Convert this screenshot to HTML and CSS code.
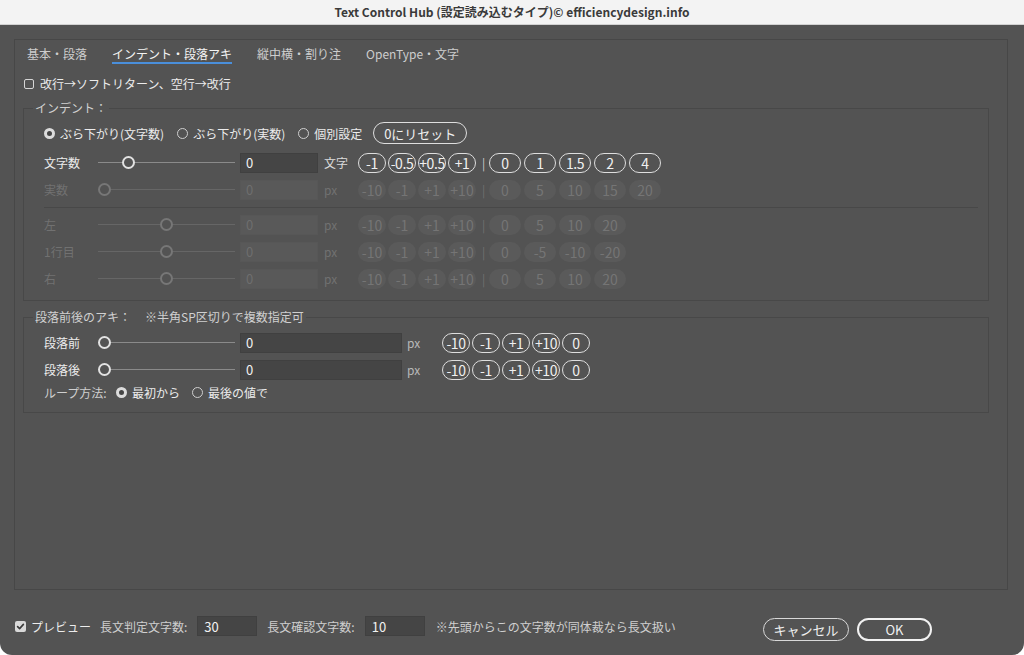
FILE: index.html
```html
<!DOCTYPE html>
<html lang="ja">
<head>
    <meta charset="UTF-8">
    <title>Text Control Hub</title>
    <link rel="stylesheet" href="styles.css">
</head>
<body>
    <div class="window">
        <div class="titlebar">Text Control Hub (設定読み込むタイプ)© efficiencydesign.info</div>

        <div class="content">
            <div class="panel">
                <div class="tabs">
                    <span class="tab">基本・段落</span>
                    <span class="tab active">インデント・段落アキ</span>
                    <span class="tab">縦中横・割り注</span>
                    <span class="tab">OpenType・文字</span>
                </div>

                <div class="check-row">
                    <span class="checkbox"></span>
                    <span>改行→ソフトリターン、空行→改行</span>
                </div>

                <fieldset class="group indent">
                    <legend>インデント：</legend>

                    <div class="radio-row">
                        <span class="radio on"></span><span class="radio-text">ぶら下がり(文字数)</span>
                        <span class="radio"></span><span class="radio-text">ぶら下がり(実数)</span>
                        <span class="radio"></span><span class="radio-text">個別設定</span>
                        <button class="reset">0にリセット</button>
                    </div>

                    <div class="row">
                        <span class="label">文字数</span>
                        <div class="slider"><span class="knob" style="left: 24px"></span></div>
                        <input class="field" type="text" value="0">
                        <span class="unit">文字</span>
                        <button class="pill">-1</button>
                        <button class="pill">-0.5</button>
                        <button class="pill">+0.5</button>
                        <button class="pill">+1</button>
                        <span class="sep">|</span>
                        <button class="pill wide">0</button>
                        <button class="pill wide">1</button>
                        <button class="pill wide">1.5</button>
                        <button class="pill wide">2</button>
                        <button class="pill wide">4</button>
                    </div>

                    <div class="row off">
                        <span class="label">実数</span>
                        <div class="slider"><span class="knob" style="left: 0px"></span></div>
                        <input class="field" type="text" value="0" disabled>
                        <span class="unit">px</span>
                        <button class="pill">-10</button>
                        <button class="pill">-1</button>
                        <button class="pill">+1</button>
                        <button class="pill">+10</button>
                        <span class="sep">|</span>
                        <button class="pill wide">0</button>
                        <button class="pill wide">5</button>
                        <button class="pill wide">10</button>
                        <button class="pill wide">15</button>
                        <button class="pill wide">20</button>
                    </div>

                    <div class="divider"></div>

                    <div class="row off">
                        <span class="label">左</span>
                        <div class="slider"><span class="knob" style="left: 62px"></span></div>
                        <input class="field" type="text" value="0" disabled>
                        <span class="unit">px</span>
                        <button class="pill">-10</button>
                        <button class="pill">-1</button>
                        <button class="pill">+1</button>
                        <button class="pill">+10</button>
                        <span class="sep">|</span>
                        <button class="pill wide">0</button>
                        <button class="pill wide">5</button>
                        <button class="pill wide">10</button>
                        <button class="pill wide">20</button>
                    </div>

                    <div class="row off">
                        <span class="label">1行目</span>
                        <div class="slider"><span class="knob" style="left: 62px"></span></div>
                        <input class="field" type="text" value="0" disabled>
                        <span class="unit">px</span>
                        <button class="pill">-10</button>
                        <button class="pill">-1</button>
                        <button class="pill">+1</button>
                        <button class="pill">+10</button>
                        <span class="sep">|</span>
                        <button class="pill wide">0</button>
                        <button class="pill wide">-5</button>
                        <button class="pill wide">-10</button>
                        <button class="pill wide">-20</button>
                    </div>

                    <div class="row off">
                        <span class="label">右</span>
                        <div class="slider"><span class="knob" style="left: 62px"></span></div>
                        <input class="field" type="text" value="0" disabled>
                        <span class="unit">px</span>
                        <button class="pill">-10</button>
                        <button class="pill">-1</button>
                        <button class="pill">+1</button>
                        <button class="pill">+10</button>
                        <span class="sep">|</span>
                        <button class="pill wide">0</button>
                        <button class="pill wide">5</button>
                        <button class="pill wide">10</button>
                        <button class="pill wide">20</button>
                    </div>
                </fieldset>

                <fieldset class="group para">
                    <legend>段落前後のアキ：<span class="note">※半角SP区切りで複数指定可</span></legend>

                    <div class="row">
                        <span class="label">段落前</span>
                        <div class="slider"><span class="knob" style="left: 0px"></span></div>
                        <input class="field long" type="text" value="0">
                        <span class="unit px">px</span>
                        <button class="pill">-10</button>
                        <button class="pill">-1</button>
                        <button class="pill">+1</button>
                        <button class="pill">+10</button>
                        <button class="pill">0</button>
                    </div>

                    <div class="row">
                        <span class="label">段落後</span>
                        <div class="slider"><span class="knob" style="left: 0px"></span></div>
                        <input class="field long" type="text" value="0">
                        <span class="unit px">px</span>
                        <button class="pill">-10</button>
                        <button class="pill">-1</button>
                        <button class="pill">+1</button>
                        <button class="pill">+10</button>
                        <button class="pill">0</button>
                    </div>

                    <div class="loop-row">
                        <span class="loop-label">ループ方法:</span>
                        <span class="radio on"></span><span class="radio-text">最初から</span>
                        <span class="radio"></span><span class="radio-text">最後の値で</span>
                    </div>
                </fieldset>
            </div>

            <div class="footer">
                <div class="options">
                    <span class="checkbox checked">
                        <svg viewBox="0 0 11 11" width="11" height="11"><path d="M2.6 5.6 L4.6 7.6 L8.4 3.4" fill="none" stroke="#3a3a3a" stroke-width="1.6" stroke-linecap="round" stroke-linejoin="round"/></svg>
                    </span>
                    <span class="preview">プレビュー</span>
                    <span class="opt-label">長文判定文字数:</span>
                    <input class="field short" type="text" value="30">
                    <span class="opt-label">長文確認文字数:</span>
                    <input class="field short" type="text" value="10">
                    <span class="opt-note">※先頭からこの文字数が同体裁なら長文扱い</span>
                </div>
                <div class="actions">
                    <button class="btn">キャンセル</button>
                    <button class="btn ok">OK</button>
                </div>
            </div>
        </div>
    </div>
</body>
</html>
```

FILE: styles.css
```css
* {
    box-sizing: border-box;
}

body {
    margin: 0;
    background: #ffffff;
    font-family: "Noto Sans CJK JP", sans-serif;
    font-size: 12px;
    color: #e6e6e6;
}

button,
input {
    font-family: inherit;
    font-size: 12px;
    margin: 0;
    padding: 0;
}

.window {
    width: 1024px;
    height: 655px;
    background: #535353;
    border-radius: 0 0 12px 12px;
    overflow: hidden;
    display: flex;
    flex-direction: column;
}

.titlebar {
    height: 25px;
    flex: none;
    background: #f3f3f3;
    border-bottom: 1px solid #d2d2d2;
    color: #3a3a3a;
    font-weight: 700;
    line-height: 24px;
    text-align: center;
}

.content {
    padding: 14px 16px 0 14px;
}

.panel {
    height: 551px;
    border: 1px solid #474747;
}

/* tabs */
.tabs {
    display: flex;
    gap: 25px;
    height: 24px;
    padding: 5px 0 0 12px;
}

.tab {
    line-height: 17px;
    color: #cdcdcd;
    border-bottom: 2px solid transparent;
}

.tab.active {
    color: #f4f4f4;
    border-bottom-color: #4a8fdb;
}

.check-row {
    display: flex;
    align-items: center;
    margin: 11px 0 0 9px;
    line-height: 17px;
    color: #ececec;
}

.checkbox {
    width: 10px;
    height: 10px;
    border: 1px solid #d6d6d6;
    border-radius: 2px;
    margin-right: 6px;
}

.checkbox.checked {
    width: 11px;
    height: 11px;
    border: none;
    background: #d9d9d9;
    display: flex;
}

/* groups */
.group {
    margin: 8px 18px 0 8px;
    border: 1px solid #484848;
    padding: 6px 10px 8px 20px;
    min-width: 0;
}

.group legend {
    margin-left: -11px;
    padding: 0 2px;
    line-height: 16px;
    color: #d0d0d0;
}

.group .note {
    margin-left: 14px;
}

.para {
    padding-top: 4px;
    padding-bottom: 11px;
}

.radio-row,
.loop-row {
    display: flex;
    align-items: center;
    height: 22px;
}

.radio {
    width: 11px;
    height: 11px;
    border: 1px solid #cfcfcf;
    border-radius: 50%;
    margin-right: 5px;
    flex: none;
}

.radio.on {
    border: 3px solid #dcdcdc;
    background: #444444;
}

.radio-text {
    margin-right: 13px;
    color: #ececec;
}

.reset {
    width: 94px;
    height: 22px;
    border: 1px solid #dedede;
    border-radius: 11px;
    background: transparent;
    color: #f0f0f0;
    font-size: 13px;
    margin-left: -2px;
}

.row {
    display: flex;
    align-items: center;
    height: 27px;
}

.radio-row + .row {
    margin-top: 5px;
}

.label {
    width: 54px;
    flex: none;
    color: #ececec;
}

.slider {
    position: relative;
    width: 137px;
    height: 13px;
    flex: none;
}

.slider::before {
    content: "";
    position: absolute;
    left: 0;
    right: 0;
    top: 6px;
    height: 1px;
    background: #8a8a8a;
}

.knob {
    position: absolute;
    top: 0;
    width: 13px;
    height: 13px;
    border: 2px solid #e2e2e2;
    border-radius: 50%;
    background: #535353;
}

.field {
    width: 78px;
    height: 20px;
    margin-left: 5px;
    padding-left: 5px;
    background: #454545;
    border: 1px solid #404040;
    color: #f2f2f2;
    font-size: 13px;
    outline: none;
}

.field.long {
    width: 162px;
}

.field.short {
    width: 60px;
    margin: 0 10px 0 0;
    padding-left: 6px;
}

.unit {
    width: 34px;
    margin-left: 6px;
    flex: none;
    color: #dcdcdc;
}

.unit.px {
    width: 35px;
    margin-left: 5px;
    color: #b8b8b8;
}

.pill {
    width: 28px;
    height: 20px;
    margin-right: 2px;
    flex: none;
    border: 1px solid #dedede;
    border-radius: 10px;
    background: transparent;
    color: #f0f0f0;
    font-size: 14px;
    white-space: nowrap;
    overflow: visible;
    display: flex;
    align-items: center;
    justify-content: center;
    letter-spacing: -0.4px;
}

.pill.wide {
    width: 32px;
    margin-right: 3px;
}

.sep {
    width: 11px;
    text-align: center;
    color: #cfcfcf;
}

/* disabled rows */
.row.off .label,
.row.off .unit,
.row.off .sep {
    color: #717171;
}

.row.off .slider::before {
    background: #666666;
}

.row.off .knob {
    border-color: #777777;
}

.row.off .field {
    background: #595959;
    border-color: #575757;
    color: #6e6e6e;
}

.row.off .pill {
    border-color: transparent;
    background: #5a5a5a;
    color: #757575;
    letter-spacing: 0;
}

.divider {
    height: 1px;
    margin: 4px 0 3px 0;
    background: #484848;
}

.loop-row {
    height: 18px;
}

.loop-label {
    width: 72px;
    color: #cfcfcf;
}

.loop-row .radio-text {
    margin-right: 12px;
}

/* footer */
.footer {
    display: flex;
    align-items: flex-start;
    padding: 0 76px 0 1px;
}

.options {
    display: flex;
    align-items: center;
    height: 20px;
    margin-top: 26px;
}

.options .checkbox {
    margin-right: 5px;
}

.preview {
    margin-right: 9px;
    color: #ececec;
}

.opt-label {
    margin-right: 10px;
    color: #cfcfcf;
}

.opt-note {
    margin-left: 1px;
    color: #cfcfcf;
}

.actions {
    display: flex;
    margin-left: auto;
    margin-top: 28px;
}

.btn {
    width: 86px;
    height: 23px;
    border: 1px solid #d8d8d8;
    border-radius: 12px;
    background: transparent;
    color: #f0f0f0;
    font-size: 13px;
}

.btn.ok {
    width: 75px;
    margin-left: 8px;
    border: 2px solid #f2f2f2;
}
```
